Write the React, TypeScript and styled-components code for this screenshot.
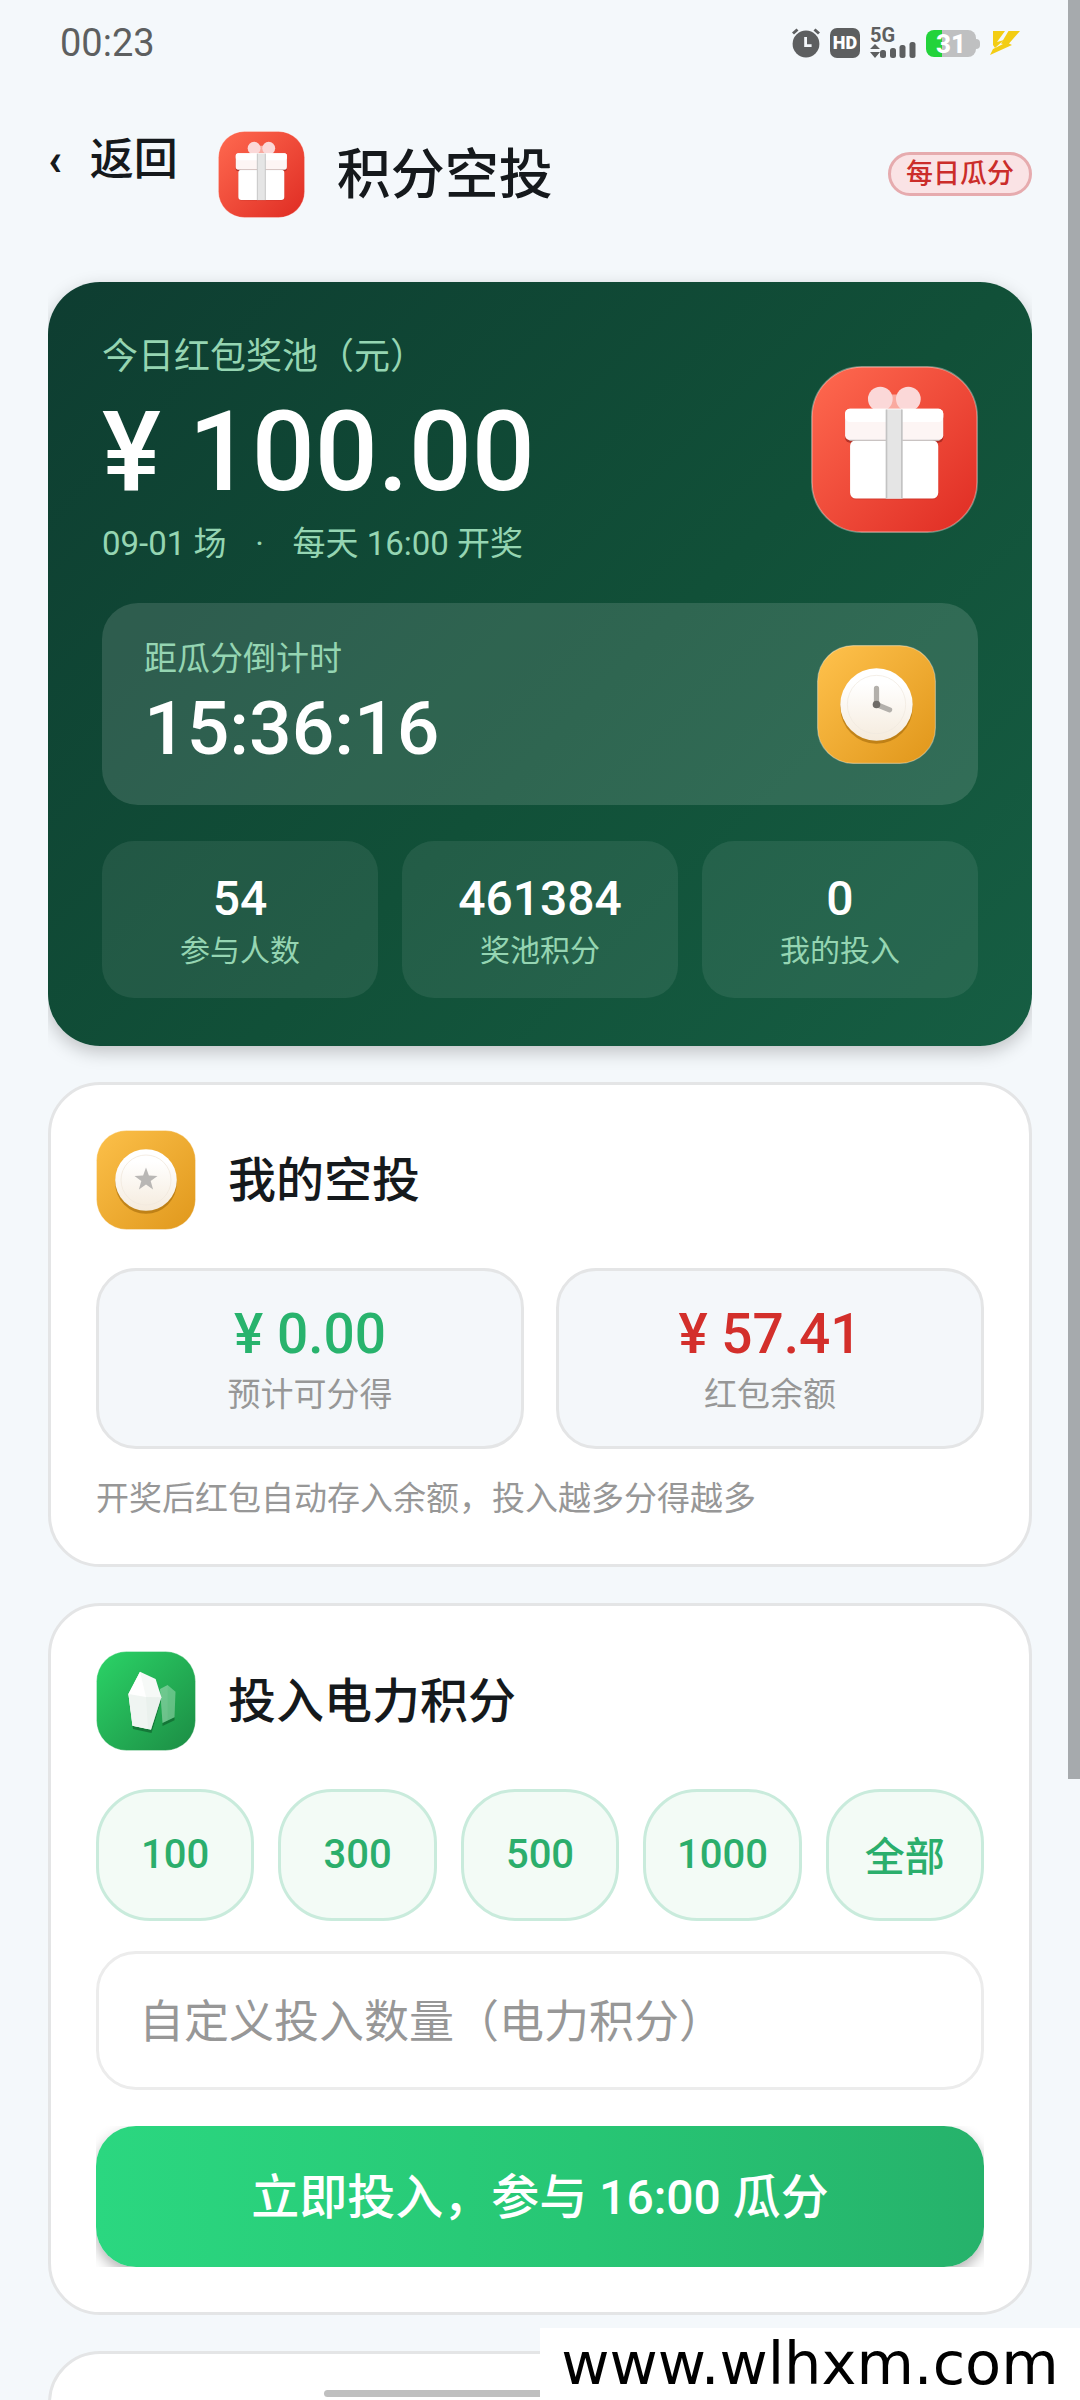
import { useState } from 'react';
import styled, { createGlobalStyle } from 'styled-components';

const GlobalStyle = createGlobalStyle`
  * {
    box-sizing: border-box;
  }
  body {
    margin: 0;
    background: #f4f8fb;
    color: #15191c;
    font-family: Roboto, 'Noto Sans CJK SC', sans-serif;
  }
  button, input {
    font-family: inherit;
  }
  h1, h2, p, dl, dd, dt {
    margin: 0;
    font-weight: 400;
  }
`;

const Page = styled.div`
  position: relative;
  height: 100vh;
  overflow: hidden;
  padding: 0 48px;
`;

const ScrollThumb = styled.div`
  position: absolute;
  top: 0;
  right: 0;
  width: 12px;
  height: 1779px;
  background: #a6aaad;
`;

/* status bar */
const StatusBar = styled.div`
  display: flex;
  align-items: center;
  justify-content: space-between;
  height: 86px;
  padding: 0 12px;
  color: #5d5f60;
`;

const Time = styled.span`
  font-size: 38px;
  line-height: 40px;
`;

const StatusIcons = styled.div`
  display: flex;
  align-items: center;
  gap: 10px;
`;

const HdTag = styled.span`
  width: 30px;
  height: 30px;
  border-radius: 7px;
  background: #5d5f60;
  color: #fff;
  font-size: 18px;
  font-weight: 900;
  line-height: 30px;
  text-align: center;
`;

const Battery = styled.span`
  position: relative;
  width: 50px;
  height: 27px;
  margin-right: 4px;
  border-radius: 8px;
  background: linear-gradient(90deg, #23d33b 32%, #bfc0c1 32%);
  color: #fff;
  font-size: 26px;
  font-weight: 800;
  line-height: 28px;
  text-align: center;

  &::after {
    content: '';
    position: absolute;
    top: 9px;
    right: -4px;
    width: 4px;
    height: 10px;
    border-radius: 0 4px 4px 0;
    background: #bfc0c1;
  }
`;

/* header */
const Header = styled.header`
  display: flex;
  align-items: center;
  height: 176px;
`;

const BackButton = styled.button`
  display: flex;
  gap: 28px;
  margin-right: 40px;
  padding: 0 0 28px;
  border: 0;
  background: none;
  color: inherit;
  font-size: 44px;
  font-weight: 500;
  line-height: 56px;
`;

const Chevron = styled.span`
  font-weight: 800;
`;

const PageTitle = styled.h1`
  margin-left: 32px;
  padding-top: 4px;
  font-size: 54px;
  font-weight: 500;
  line-height: 72px;
`;

const Badge = styled.span`
  margin-left: auto;
  padding: 0 15px;
  border: 3px solid #e6abae;
  border-radius: 22px;
  background: #fae3e5;
  color: #cb2d2a;
  font-size: 27px;
  font-weight: 500;
  line-height: 38px;
`;

/* prize pool */
const Hero = styled.section`
  margin: 20px 0 36px;
  padding: 53px 54px 48px;
  border-radius: 52px;
  background: linear-gradient(135deg, #0e3d31, #115038 55%, #165e43);
  box-shadow: 0 6px 18px rgba(0, 0, 0, 0.22);
  clip-path: inset(-30px 0);
  color: #fff;
`;

const HeroTop = styled.div`
  display: flex;
  align-items: center;
  justify-content: space-between;
  margin-bottom: 39px;
`;

const HeroLabel = styled.p`
  color: #95d5b2;
  font-size: 36px;
  line-height: 45px;
`;

const Pool = styled.p`
  font-size: 111px;
  font-weight: 500;
  line-height: 144px;
`;

const Caption = styled.p`
  color: #95d5b2;
  font-size: 33px;
  line-height: 40px;
`;

const Dot = styled.span`
  display: inline-block;
  width: 66px;
  text-align: center;
`;

const Countdown = styled.div`
  display: flex;
  align-items: center;
  justify-content: space-between;
  height: 202px;
  padding: 0 42px;
  border-radius: 36px;
  background: rgba(255, 255, 255, 0.13);
`;

const CountdownText = styled.div`
  padding-top: 8px;
`;

const CountdownTime = styled.p`
  font-size: 75px;
  font-weight: 500;
  line-height: 98px;
`;

const Stats = styled.dl`
  display: grid;
  grid-template-columns: repeat(3, 1fr);
  gap: 24px;
  margin-top: 36px;
`;

const Stat = styled.div`
  display: flex;
  flex-direction: column-reverse;
  padding: 30px 0 23px;
  border-radius: 32px;
  background: rgba(255, 255, 255, 0.08);
  text-align: center;
`;

const StatValue = styled.dd`
  font-size: 48px;
  font-weight: 500;
  line-height: 56px;
`;

const StatLabel = styled.dt`
  color: #95d5b2;
  font-size: 30px;
  line-height: 48px;
`;

/* white cards */
const Card = styled.section`
  min-height: 200px;
  margin-bottom: 36px;
  padding: 45px;
  border: 3px solid #e4e5e6;
  border-radius: 52px;
  background: #fff;
`;

const CardHead = styled.div`
  display: flex;
  align-items: center;
  gap: 32px;
  margin-bottom: 38px;
`;

const CardTitle = styled.h2`
  padding-top: 2px;
  font-size: 48px;
  font-weight: 500;
  line-height: 60px;
`;

const Balances = styled.dl`
  display: grid;
  grid-template-columns: repeat(2, 1fr);
  gap: 32px;
`;

const Balance = styled.div`
  display: flex;
  flex-direction: column-reverse;
  gap: 6px;
  padding: 30px;
  border: 3px solid #e4e5e6;
  border-radius: 40px;
  background: #f4f7fa;
  text-align: center;
`;

const BalanceValue = styled.dd<{ $color: string }>`
  color: ${({ $color }) => $color};
  font-size: 55px;
  font-weight: 500;
  line-height: 66px;
`;

const BalanceLabel = styled.dt`
  color: #979797;
  font-size: 33px;
  line-height: 43px;
`;

const Note = styled.p`
  margin-top: 30px;
  color: #979797;
  font-size: 33px;
  line-height: 40px;
`;

const Chips = styled.div`
  display: grid;
  grid-template-columns: repeat(5, 1fr);
  gap: 24px;
`;

const Chip = styled.button`
  height: 132px;
  padding: 0 0 2px;
  border: 3px solid #c9ebdc;
  border-radius: 54px;
  background: #f3fbf6;
  color: #2bae6c;
  font-size: 40px;
  font-weight: 500;
`;

const AmountInput = styled.input`
  display: block;
  width: 100%;
  height: 139px;
  margin: 30px 0 36px;
  padding: 4px 40px 0;
  border: 3px solid #ececec;
  border-radius: 40px;
  background: #fff;
  color: inherit;
  font-size: 45px;

  &::placeholder {
    color: #979797;
    opacity: 1;
  }
`;

const SubmitButton = styled.button`
  display: block;
  width: 100%;
  height: 141px;
  padding: 0 0 8px;
  border: 0;
  border-radius: 40px;
  background: linear-gradient(90deg, #2bd780, #27c674 55%, #26b26b);
  box-shadow: 0 6px 14px rgba(0, 0, 0, 0.3);
  clip-path: inset(0);
  color: #fff;
  font-size: 48px;
  font-weight: 500;
`;

/* bottom overlays */
const HomeBar = styled.div`
  position: absolute;
  bottom: 3px;
  left: 30%;
  width: 40%;
  height: 7px;
  border-radius: 4px;
  background: #bfbfbf;
`;

const SiteLink = styled.a`
  position: absolute;
  right: 0;
  bottom: 0;
  width: 50%;
  background: #fff;
  color: #000;
  font-family: 'DejaVu Sans', sans-serif;
  font-size: 59px;
  line-height: 72px;
  text-align: center;
  text-decoration: none;
`;

const AlarmIcon = () => (
  <svg width="28" height="30" viewBox="0 0 28 30" aria-hidden="true">
    <circle cx="14" cy="16" r="13.4" fill="#5d5f60" />
    <path d="M1 5.5L5.5 1.5M27 5.5L22.5 1.5" stroke="#5d5f60" strokeWidth="3" />
    <path d="M13.6 9v8.6h6" fill="none" stroke="#f4f8fb" strokeWidth="2.8" />
  </svg>
);

const SignalIcon = () => (
  <svg width="46" height="48" viewBox="0 -8 46 48" fill="#5d5f60" aria-hidden="true">
    <text x="0" y="15" fontSize="20" fontWeight="700">5G</text>
    <path d="M0 22l5-5 5 5zM0 25h10l-5 6z" />
    <rect x="10" y="23" width="6" height="8" rx="2.5" />
    <rect x="20" y="21" width="6" height="10" rx="2.5" />
    <rect x="29.5" y="18" width="6" height="13" rx="2.5" />
    <rect x="39.5" y="15" width="6" height="16" rx="2.5" />
  </svg>
);

const BoltIcon = () => (
  <svg width="30" height="26" viewBox="0 0 30 26" fill="#f3cd14" aria-hidden="true">
    <path d="M3 1h12L7 12l7-2-9 8-2-3z" />
    <path d="M18.500 1H30L19 13.500l3 1.500-22 10 3-6 10-5-2-.5z" />
  </svg>
);

type IconProps = { size: number };

const TileBase = ({ id, from, to }: { id: string; from: string; to: string }) => (
  <>
    <defs>
      <linearGradient id={id} x1="0" y1="0" x2="1" y2="1">
        <stop offset="0" stopColor={from} />
        <stop offset="1" stopColor={to} />
      </linearGradient>
      <linearGradient id={`${id}-face`} x1="0" y1="0" x2="0" y2="1">
        <stop offset="0.2" stopColor="#fff" />
        <stop offset="1" stopColor="#f5ebdd" />
      </linearGradient>
    </defs>
    <rect x="0.5" y="0.5" width="99" height="99" rx="30" fill={`url(#${id})`} stroke="#fff" strokeOpacity="0.35" />
  </>
);

const GiftIcon = ({ size }: IconProps) => (
  <svg width={size} height={size} viewBox="0 0 100 100" aria-hidden="true">
    <TileBase id={`gift${size}`} from="#ff6a50" to="#df2c23" />
    <path d="M46 17h8l4 9H42z" fill="#fff" fillOpacity="0.5" />
    <circle cx="41.5" cy="19.8" r="7.4" fill="#fbd8d8" />
    <circle cx="58.3" cy="19.8" r="7.4" fill="#fbd8d8" />
    <rect x="20.4" y="27" width="58.8" height="19" rx="3" fill="#8a1d17" fillOpacity="0.6" />
    <rect x="23.4" y="44.4" width="52.8" height="35.6" rx="3.5" fill="#8a1d17" fillOpacity="0.25" />
    <rect x="23.4" y="44.4" width="52.8" height="35" rx="3.5" fill="#fff" />
    <rect x="20.4" y="25.6" width="58.8" height="18.8" rx="3" fill="#fdf5f4" />
    <rect x="20.4" y="25.6" width="58.8" height="8" rx="3" fill="#fff" />
    <path d="M23 44.4h54" stroke="#bcbcbc" strokeWidth="0.6" />
    <rect x="45" y="26" width="9.6" height="53.4" fill="#e5e5e5" />
    <path d="M45.2 26v53.4M54.4 26v53.4" stroke="#c3c3c3" strokeWidth="1" />
  </svg>
);

const ClockIcon = ({ size }: IconProps) => (
  <svg width={size} height={size} viewBox="0 0 100 100" aria-hidden="true">
    <TileBase id="clock" from="#ffc24d" to="#e0961a" />
    <circle cx="50" cy="52.5" r="30.4" fill="#9c6408" fillOpacity="0.55" />
    <circle cx="50" cy="50" r="30.4" fill="url(#clock-face)" />
    <circle cx="50" cy="50" r="24.5" fill="none" stroke="#efe9df" strokeWidth="0.6" />
    <path d="M50 50V36.5M50 50l11 4.5" stroke="#b3b0ab" strokeWidth="4.4" strokeLinecap="round" />
    <circle cx="50" cy="50" r="3.2" fill="#6f6c68" />
  </svg>
);

const CoinIcon = ({ size }: IconProps) => (
  <svg width={size} height={size} viewBox="0 0 100 100" aria-hidden="true">
    <TileBase id="coin" from="#fcc04a" to="#e0981c" />
    <circle cx="50" cy="53" r="30.8" fill="#9c6408" fillOpacity="0.55" />
    <circle cx="50" cy="50" r="30.8" fill="url(#coin-face)" />
    <circle cx="50" cy="50" r="25" fill="none" stroke="#f1e9dd" strokeWidth="0.8" />
    <path
      d="M50 37.500l2.900 8.100 8.600.3-6.800 5.200 2.400 8.300-7.100-4.900-7.100 4.900 2.400-8.300-6.800-5.200 8.600-.3z"
      fill="#b9b7b5"
    />
  </svg>
);

const CrystalIcon = ({ size }: IconProps) => (
  <svg width={size} height={size} viewBox="0 0 100 100" aria-hidden="true">
    <TileBase id="crystal" from="#2bd467" to="#1c8c44" />
    <path d="M66.500 72l12-5.700v3L66.500 75z" fill="#0c5a28" fillOpacity="0.6" />
    <path d="M71.600 34l7.900 6.700-1 25.600-12 5.700L64 38z" fill="#fff" fillOpacity="0.3" />
    <path d="M71.600 34v35.500l-5.100 2.500L64 38z" fill="#fff" fillOpacity="0.06" />
    <path d="M36.500 74.700L55 78.700l10-32v3L55.500 82 37 78z" fill="#0c5a28" fillOpacity="0.6" />
    <path d="M44 20.700L59.600 28l5.800 18.300L55 78.700l-18.500-4-4.100-31.700z" fill="#f6f9f7" />
    <path d="M44 20.700L50 46l2 32-15.500-3.300-4.100-31.700z" fill="#fff" />
    <path d="M32.400 43L50 46l15.400.3L55 78.700l-18.500-4z" fill="#d5e2da" fillOpacity="0.35" />
  </svg>
);

const stats = [
  { label: '参与人数', value: '54' },
  { label: '奖池积分', value: '461384' },
  { label: '我的投入', value: '0' },
];

const balances = [
  { label: '预计可分得', value: '¥ 0.00', color: '#28b36d' },
  { label: '红包余额', value: '¥ 57.41', color: '#d32f2b' },
];

const amounts = ['100', '300', '500', '1000', '全部'];

const App = () => {
  const [amount, setAmount] = useState('');

  return (
    <>
      <GlobalStyle />
      <Page>
        <StatusBar>
          <Time>00:23</Time>
          <StatusIcons>
            <AlarmIcon />
            <HdTag>HD</HdTag>
            <SignalIcon />
            <Battery>31</Battery>
            <BoltIcon />
          </StatusIcons>
        </StatusBar>
        <Header>
          <BackButton type="button">
            <Chevron>‹</Chevron>
            <span>返回</span>
          </BackButton>
          <GiftIcon size={87} />
          <PageTitle>积分空投</PageTitle>
          <Badge>每日瓜分</Badge>
        </Header>
        <main>
          <Hero>
            <HeroTop>
              <div>
                <HeroLabel>今日红包奖池（元）</HeroLabel>
                <Pool>¥ 100.00</Pool>
                <Caption>
                  09-01 场<Dot>·</Dot>每天 16:00 开奖
                </Caption>
              </div>
              <GiftIcon size={167} />
            </HeroTop>
            <Countdown>
              <CountdownText>
                <Caption>距瓜分倒计时</Caption>
                <CountdownTime>15:36:16</CountdownTime>
              </CountdownText>
              <ClockIcon size={119} />
            </Countdown>
            <Stats>
              {stats.map((item) => (
                <Stat key={item.label}>
                  <StatLabel>{item.label}</StatLabel>
                  <StatValue>{item.value}</StatValue>
                </Stat>
              ))}
            </Stats>
          </Hero>

          <Card>
            <CardHead>
              <CoinIcon size={100} />
              <CardTitle>我的空投</CardTitle>
            </CardHead>
            <Balances>
              {balances.map((item) => (
                <Balance key={item.label}>
                  <BalanceLabel>{item.label}</BalanceLabel>
                  <BalanceValue $color={item.color}>{item.value}</BalanceValue>
                </Balance>
              ))}
            </Balances>
            <Note>开奖后红包自动存入余额，投入越多分得越多</Note>
          </Card>

          <Card>
            <CardHead>
              <CrystalIcon size={100} />
              <CardTitle>投入电力积分</CardTitle>
            </CardHead>
            <Chips>
              {amounts.map((item) => (
                <Chip key={item} type="button" onClick={() => setAmount(item === '全部' ? '' : item)}>
                  {item}
                </Chip>
              ))}
            </Chips>
            <AmountInput
              aria-label="自定义投入数量"
              inputMode="numeric"
              placeholder="自定义投入数量（电力积分）"
              value={amount}
              onChange={(e) => setAmount(e.target.value)}
            />
            <SubmitButton type="button">立即投入，参与 16:00 瓜分</SubmitButton>
          </Card>

          <Card />
        </main>
        <ScrollThumb />
        <HomeBar />
        <SiteLink href="http://www.wlhxm.com">www.wlhxm.com</SiteLink>
      </Page>
    </>
  );
};

export default App;
